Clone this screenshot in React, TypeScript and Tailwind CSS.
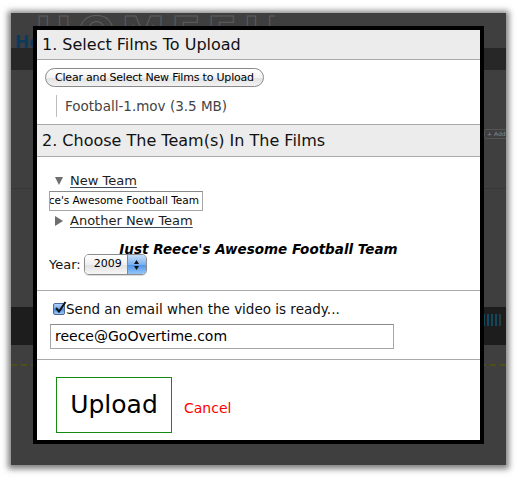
import React from "react"

// dimmed page that sits behind the dialog
const BackdropPage = () => (
  <>
    <div className="absolute left-[24px] top-[2px] h-[11px] w-[240px] overflow-hidden">
      <div className="mt-[-6px] whitespace-nowrap text-[44px] font-bold leading-[50px] tracking-[6px] text-transparent [-webkit-text-stroke:1px_#5e5e5e]">
        HOMEFIELD
      </div>
    </div>
    <div className="absolute left-[4px] top-[17px] text-[17px] font-bold text-[#0c3c5a]">He</div>
    <div className="absolute left-0 top-[35px] h-[22px] w-full bg-[#272727]" />
    <div className="absolute left-[473px] top-[116px] whitespace-nowrap rounded-[2px] border border-[#555] px-[2px] text-[6px] leading-[8px] text-[#888]">
      + Add
    </div>
    <div className="absolute left-0 top-[175px] h-px w-full bg-[#363636]" />
    <div className="absolute left-0 top-[294px] h-[38px] w-full bg-[#1d1d1d]">
      <div className="absolute left-[472px] top-[7px] flex gap-[2px]">
        <span className="h-[12px] w-[2px] bg-[#10485f]" />
        <span className="h-[12px] w-[2px] bg-[#10485f]" />
        <span className="h-[12px] w-[2px] bg-[#10485f]" />
        <span className="h-[12px] w-[2px] bg-[#10485f]" />
        <span className="h-[12px] w-[2px] bg-[#2a3a40]" />
      </div>
    </div>
    <div className="absolute left-0 top-[351px] w-full border-t-2 border-dashed border-[#4e4e16]" />
  </>
)

const TriangleDown = () => (
  <svg width="8" height="8" viewBox="0 0 8 8" className="shrink-0">
    <polygon points="0,0 8,0 4,8" fill="#6e6e6e" />
  </svg>
)

const TriangleRight = () => (
  <svg width="8" height="10" viewBox="0 0 8 10" className="shrink-0">
    <polygon points="0,0 8,5 0,10" fill="#6e6e6e" />
  </svg>
)

const YearSelect = () => (
  <div className="flex h-[21px] w-[63px] overflow-hidden rounded-[5px] border border-[#8c8c8c] shadow-[0_1px_1px_rgba(0,0,0,0.15)]">
    <div className="flex flex-1 items-center bg-[linear-gradient(#ffffff,#f0f0f0_50%,#e0e0e0_51%,#f6f6f6)] pl-[9px] text-[11px] text-black">
      2009
    </div>
    <div className="flex w-[19px] flex-col items-center justify-center gap-[2px] border-l border-[#6a8cc0] bg-[linear-gradient(#c4ddf8,#7db2f0_50%,#4d92e8_51%,#94c7f8)]">
      <svg width="5" height="4" viewBox="0 0 5 4">
        <polygon points="2.5,0 5,4 0,4" fill="#111" />
      </svg>
      <svg width="5" height="4" viewBox="0 0 5 4">
        <polygon points="0,0 5,0 2.5,4" fill="#111" />
      </svg>
    </div>
  </div>
)

const CheckBox = () => (
  <span className="relative block h-[12px] w-[12px] shrink-0 rounded-[2px] border border-[#4a6b9b] bg-[linear-gradient(#b3d3f7,#6aa3e8_50%,#4288e0_51%,#a2cbf6)]">
    <svg width="13" height="13" viewBox="0 0 13 13" className="absolute left-[0px] top-[-3px]">
      <path d="M2 7 L5 10.5 L11.5 1" stroke="#111" strokeWidth="2" fill="none" />
    </svg>
  </span>
)

export default function App() {
  return (
    <div className="relative h-[483px] w-[521px] overflow-hidden bg-white font-['DejaVu_Sans',sans-serif] text-[#111]">
      <div className="absolute left-[11px] top-[13px] h-[452px] w-[495px] overflow-hidden bg-[#3f3f3f] shadow-[0_1px_6px_3px_rgba(0,0,0,0.5)]">
        <BackdropPage />
      </div>

      {/* upload dialog */}
      <div className="absolute left-[33px] top-[26px] flex h-[418px] w-[451px] flex-col border-4 border-black bg-white">
        <div className="flex h-[30px] items-center border-b border-[#a9a9a9] bg-[#ececec] pl-[5px] text-[16px]">
          1. Select Films To Upload
        </div>
        <div className="flex flex-col items-start gap-[8px] pb-[7px] pl-[8px] pt-[8px]">
          <button className="h-[19px] rounded-full border border-[#8a8a8a] bg-[linear-gradient(#ffffff,#f3f3f3_50%,#e2e2e2_51%,#f2f2f2)] px-[9px] text-[11px] leading-none tracking-[-0.2px] text-black">
            Clear and Select New Films to Upload
          </button>
          <div className="ml-[11px] flex h-[22px] items-center border-l border-[#bdbdbd] pl-[8px] text-[13.5px] text-[#444]">
            Football-1.mov (3.5 MB)
          </div>
        </div>

        <div className="flex h-[33px] items-center border-y border-[#a9a9a9] bg-[#ececec] pl-[5px] text-[16px]">
          2. Choose The Team(s) In The Films
        </div>
        <div className="flex flex-col px-[12px] pb-[15px] pt-[16px]">
          <div className="ml-[6px] flex h-[16px] items-center gap-[7px] text-[13px] leading-[16px]">
            <TriangleDown />
            <a className="text-[#1e1e1e] underline decoration-[#3b4a5c] underline-offset-2">New Team</a>
          </div>
          <div className="mt-[2px] flex h-[20px] w-[154px] items-center justify-end overflow-hidden whitespace-nowrap border border-[#a6a6a6] border-t-[#8a8a8a] pr-[3px] text-[10.5px] text-black">
            Just Reece's Awesome Football Team
          </div>
          <div className="ml-[6px] mt-[2px] flex h-[16px] items-center gap-[7px] text-[13px] leading-[16px]">
            <TriangleRight />
            <a className="text-[#1e1e1e] underline decoration-[#3b4a5c] underline-offset-2">Another New Team</a>
          </div>
          <div className="mt-[15px] h-[10px] text-center text-[13.5px] font-bold italic leading-[10px] text-black">
            Just Reece's Awesome Football Team
          </div>
          <div className="flex h-[21px] items-center gap-[3px] text-[13px]">
            <span>Year:</span>
            <YearSelect />
          </div>
        </div>

        <div className="flex flex-col border-t border-[#a9a9a9] pb-[10px] pl-[13px] pt-[10px]">
          <label className="flex h-[16px] items-center gap-[1px] text-[13.5px]">
            <span className="ml-[3px]">
              <CheckBox />
            </span>
            <span>Send an email when the video is ready...</span>
          </label>
          <div className="mt-[7px] flex h-[25px] w-[344px] items-center border border-[#a6a6a6] border-t-[#8a8a8a] pl-[4px] text-[14px] text-black">
            reece@GoOvertime.com
          </div>
        </div>

        <div className="flex items-baseline border-t border-[#a9a9a9] pl-[19px] pt-[17px]">
          <button className="flex h-[56px] w-[116px] items-center justify-center border border-[#148a14] text-[25px] text-black">
            Upload
          </button>
          <a className="ml-[12px] text-[14px] text-[#ff0000]">Cancel</a>
        </div>
      </div>
    </div>
  )
}
